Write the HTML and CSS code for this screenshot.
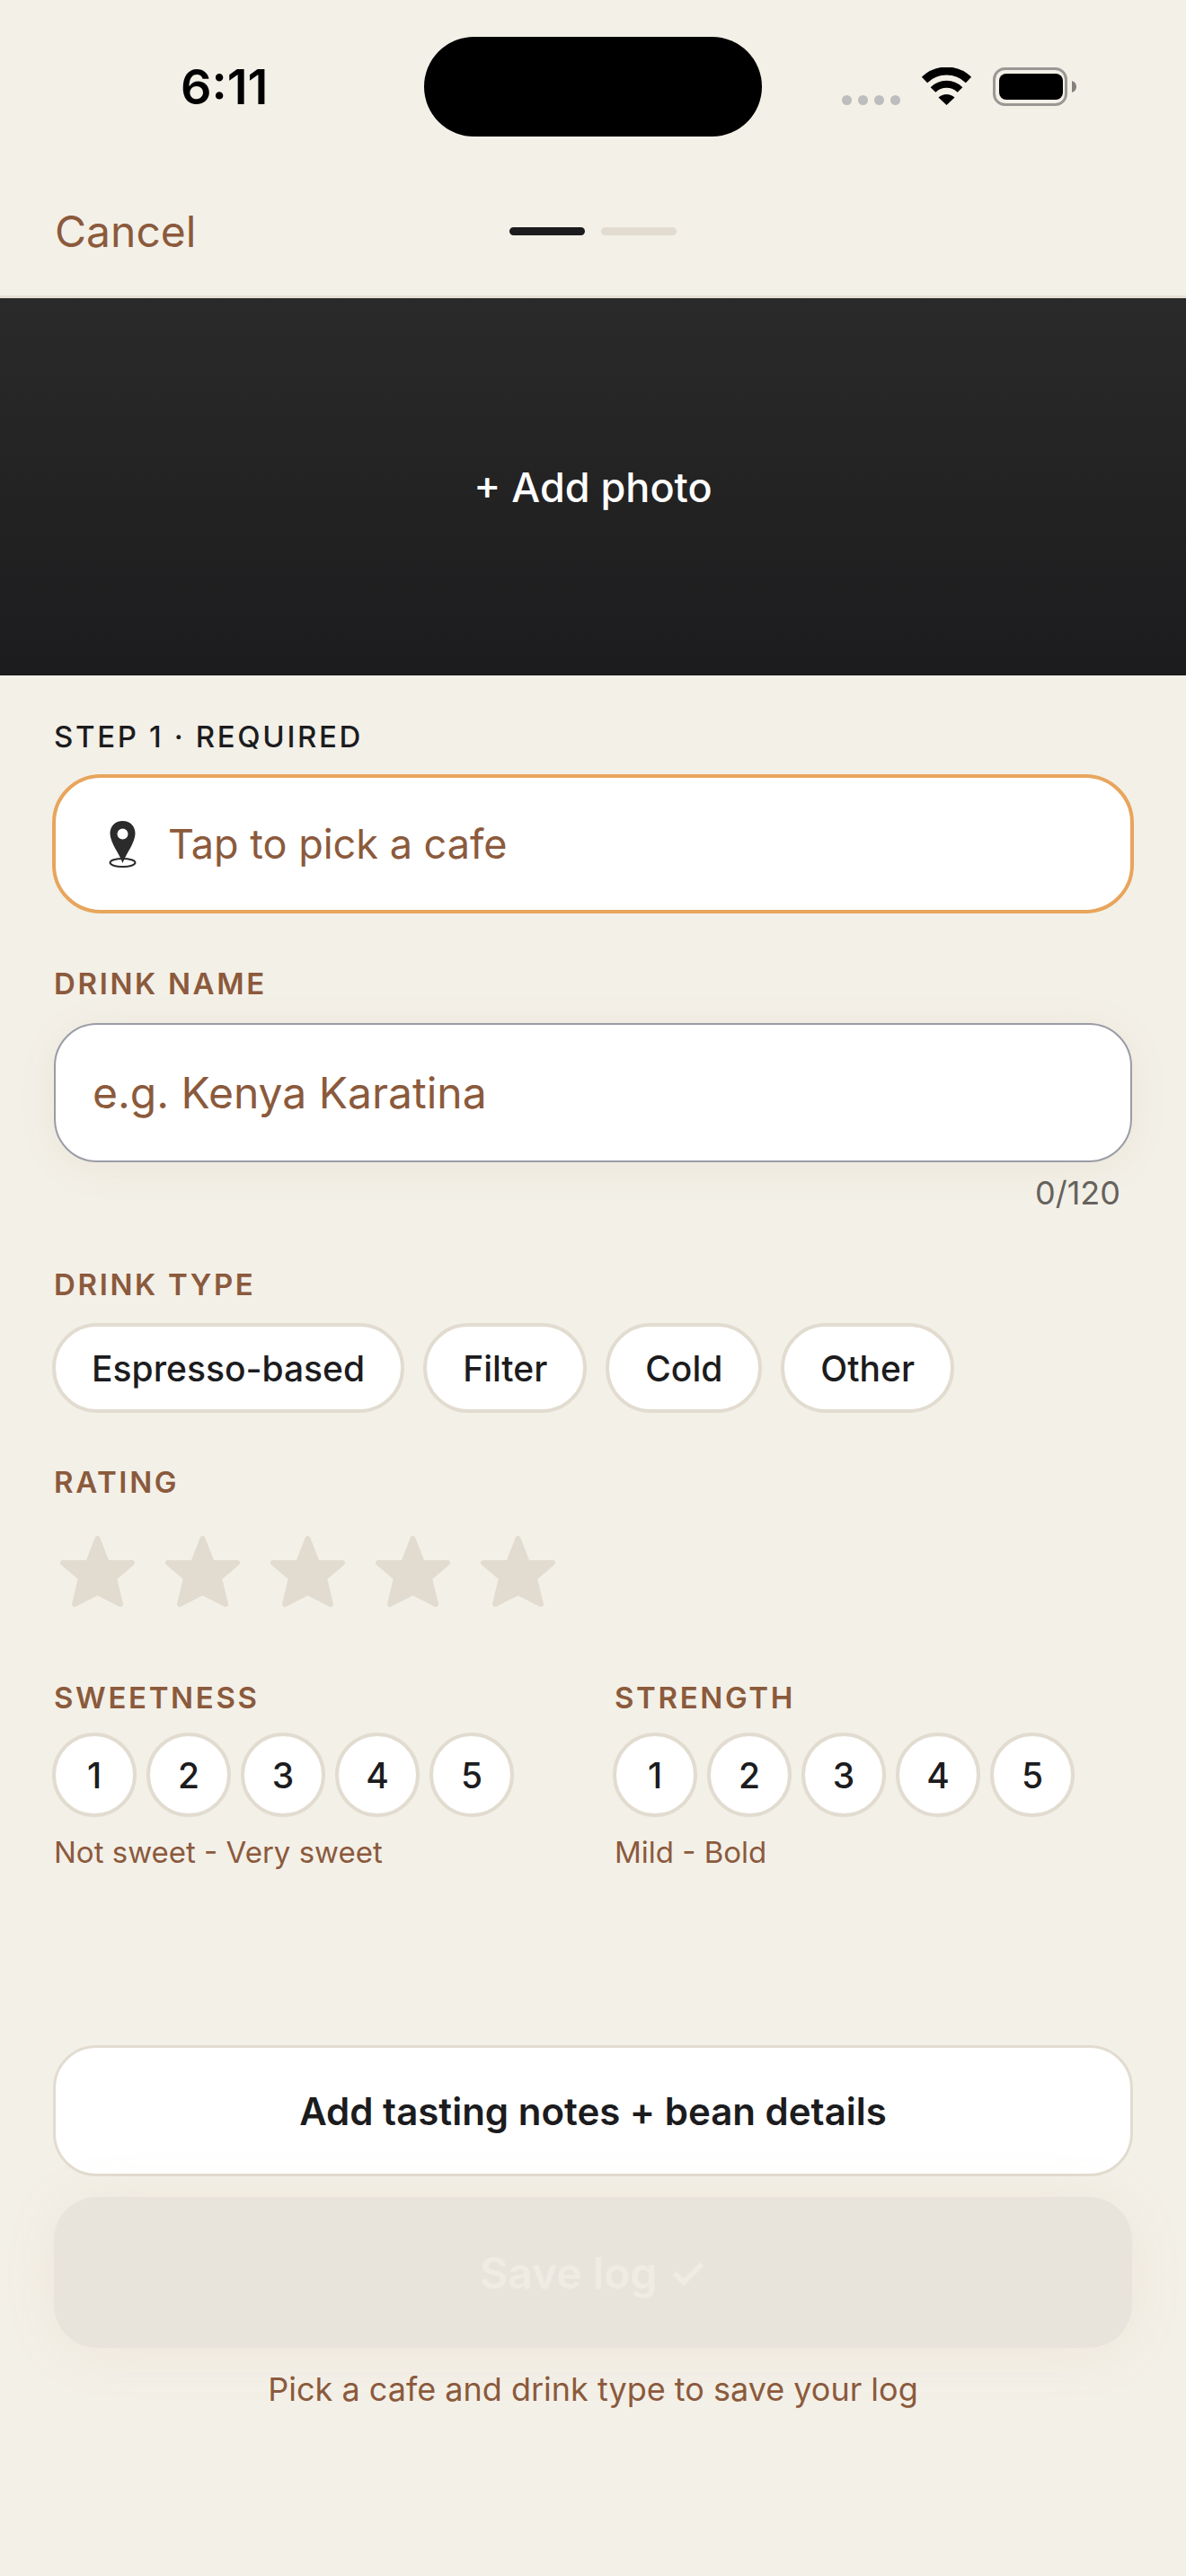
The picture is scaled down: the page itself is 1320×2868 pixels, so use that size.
FILE: index.html
```html
<!DOCTYPE html>
<html lang="en">
<head>
<meta charset="utf-8">
<title>New log</title>
<link rel="stylesheet" href="styles.css">
</head>
<body>
<div class="app">
  <div class="status">
    <div class="time">6:11</div>
    <div class="island"></div>
    <div class="status-icons">
      <div class="dots"><i></i><i></i><i></i><i></i></div>
      <svg class="wifi" width="57" height="42" viewBox="0 0 57 42"><path d="M4 14A35 35 0 0 1 53 14" fill="none" stroke="#000" stroke-width="9"/><path d="M13.500 25A21 21 0 0 1 43.500 25" fill="none" stroke="#000" stroke-width="8"/><path d="M28.500 42L19.500 33.500A13 13 0 0 1 37.500 33.500Z"/></svg>
      <svg class="battery" width="93" height="43" viewBox="0 0 93 43"><rect x="1.500" y="1.500" width="80" height="40" rx="12" fill="none" stroke="#9b9794" stroke-width="3"/><rect x="7" y="7" width="71" height="29" rx="8"/><path d="M88 15C91 16 93 18 93 21.500C93 25 91 27 88 28Z" fill="#85807c"/></svg>
    </div>
  </div>
  <header class="nav">
    <span class="cancel">Cancel</span>
    <div class="progress"><i class="on"></i><i></i></div>
  </header>
  <div class="hero"><span>+ Add photo</span></div>
  <main class="form">
    <div class="step">STEP 1 · REQUIRED</div>
    <div class="picker">
      <svg class="pin" width="31" height="52" viewBox="0 0 31 52"><ellipse cx="15.500" cy="46.500" rx="14" ry="4.500" fill="none" stroke="#2b2b2b" stroke-width="2"/><path fill-rule="evenodd" d="M15.500 0C7 0 1.500 6 1.500 14C1.500 24 11.500 36 15.500 47C19.500 36 29.500 24 29.500 14C29.500 6 24 0 15.500 0ZM15.500 8.500A6 6 0 1 1 15.500 20.500A6 6 0 1 1 15.500 8.500Z" fill="#2b2b2b"/></svg>
      <span>Tap to pick a cafe</span>
    </div>
    <div class="label name-label">DRINK NAME</div>
    <div class="input">e.g. Kenya Karatina</div>
    <div class="count">0/120</div>
    <div class="label type-label">DRINK TYPE</div>
    <div class="chips">
      <span class="chip">Espresso-based</span>
      <span class="chip">Filter</span>
      <span class="chip">Cold</span>
      <span class="chip">Other</span>
    </div>
    <div class="label rating-label">RATING</div>
    <div class="stars">
      <svg class="star" viewBox="0 0 83 80"><polygon points="41.500,3 52,30 80,30 60,47 67,76 41.500,63 16,76 23,47 3,30 31,30"/></svg>
      <svg class="star" viewBox="0 0 83 80"><polygon points="41.500,3 52,30 80,30 60,47 67,76 41.500,63 16,76 23,47 3,30 31,30"/></svg>
      <svg class="star" viewBox="0 0 83 80"><polygon points="41.500,3 52,30 80,30 60,47 67,76 41.500,63 16,76 23,47 3,30 31,30"/></svg>
      <svg class="star" viewBox="0 0 83 80"><polygon points="41.500,3 52,30 80,30 60,47 67,76 41.500,63 16,76 23,47 3,30 31,30"/></svg>
      <svg class="star" viewBox="0 0 83 80"><polygon points="41.500,3 52,30 80,30 60,47 67,76 41.500,63 16,76 23,47 3,30 31,30"/></svg>
    </div>
    <div class="scales">
      <section class="scale">
        <div class="label">SWEETNESS</div>
        <div class="circles"><span>1</span><span>2</span><span>3</span><span>4</span><span>5</span></div>
        <div class="sub">Not sweet - Very sweet</div>
      </section>
      <section class="scale">
        <div class="label">STRENGTH</div>
        <div class="circles"><span>1</span><span>2</span><span>3</span><span>4</span><span>5</span></div>
        <div class="sub">Mild - Bold</div>
      </section>
    </div>
    <div class="more">Add tasting notes + bean details</div>
    <div class="save">Save log ✓</div>
    <div class="hint">Pick a cafe and drink type to save your log</div>
  </main>
</div>
</body>
</html>
```
FILE: styles.css
```css
* { box-sizing: border-box; }
html, body { margin: 0; padding: 0; }
body { background: #f3f0e8; font-family: Inter, "Liberation Sans", sans-serif; color: #1c1c1e; }
.app { height: 2868px; overflow: hidden; position: relative; }
.status { height: 194px; position: relative; display: flex; justify-content: space-between; align-items: flex-start; }
.time { margin: 64px 0 0 201px; font-size: 54px; line-height: 66px; font-weight: 600; color: #000; }
.island { position: absolute; left: 472px; top: 41px; width: 376px; height: 111px; border-radius: 56px; background: #000; }
.status-icons { margin: 75px 122px 0 0; display: flex; align-items: flex-start; }
.dots { display: flex; gap: 7px; margin: 31px 23px 0 0; }
.dots i { width: 11px; height: 11px; border-radius: 50%; background: #bdbdbd; }
.wifi { margin-right: 23px; }
.nav { height: 138px; border-bottom: 3px solid #e6e0d4; position: relative; padding: 0 0 0 61px; }
.cancel { display: block; padding-top: 35px; font-size: 48px; line-height: 58px; color: #8b5a3c; }
.progress { position: absolute; left: 567px; top: 59px; display: flex; gap: 18px; }
.progress i { width: 84px; height: 9px; border-radius: 5px; background: #e2dcd0; }
.progress i.on { background: #1c1c1e; }
.hero { height: 420px; background: linear-gradient(180deg, #2a2a2a, #1c1c1e); display: flex; align-items: center; justify-content: center; color: #fff; font-size: 45px; font-weight: 500; }
.form { padding: 48px 60px 0; }
.step, .label { font-size: 33px; line-height: 40px; letter-spacing: 2.640px; font-weight: 500; }
.label { color: #8b5a3c; font-weight: 600; }
.picker { margin: 22px -2px 0; height: 155px; background: #fff; border: 4px solid #e8a55c; border-radius: 54px; display: flex; align-items: center; padding-left: 59px; gap: 35px; font-size: 45px; color: #8b5a3c; }
.name-label { margin-top: 58px; }
.input { margin-top: 24px; height: 155px; background: #fff; border: 2px solid #9a9ca6; border-radius: 48px; display: flex; align-items: center; padding-left: 41px; font-size: 48px; color: #8b5a3c; box-shadow: 0 6px 44px rgba(140, 120, 40, .08); }
.count { margin-top: 12px; padding-right: 13px; text-align: right; font-size: 36px; line-height: 44px; color: #66625c; }
.type-label { margin-top: 60px; }
.chips { margin: 23px 0 0 -2px; display: flex; gap: 21px; }
.chip { height: 100px; padding: 0 40px; display: flex; align-items: center; background: #fff; border: 4px solid #e2dcd0; border-radius: 50px; font-size: 39px; font-weight: 500; }
.rating-label { margin-top: 57px; }
.stars { margin: 40px 0 0 7px; display: flex; gap: 34px; }
.star { width: 83px; height: 80px; display: block; }
.star polygon { fill: #e2dcd0; stroke: #e2dcd0; stroke-width: 6; stroke-linejoin: round; }
.scales { margin-top: 80px; display: grid; grid-template-columns: 624px 1fr; }
.circles { margin: 19px 0 0 -2px; display: flex; gap: 11px; }
.circles span { width: 94px; height: 94px; display: flex; align-items: center; justify-content: center; background: #fff; border: 4px solid #e2dcd0; border-radius: 50%; font-size: 39px; font-weight: 500; }
.sub { margin-top: 19px; font-size: 33px; line-height: 40px; color: #8b5a3c; }
.more { margin: 195px -1px 0; height: 146px; background: #fff; border: 3px solid #e2dcd0; border-radius: 48px; display: flex; align-items: center; justify-content: center; font-size: 42px; font-weight: 600; }
.save { margin-top: 23px; height: 168px; background: #e8e4dc; border-radius: 48px; display: flex; align-items: center; justify-content: center; font-size: 48px; font-weight: 600; color: #efece4; box-shadow: 0 4px 64px rgba(200, 140, 80, .09); }
.hint { margin-top: 24px; text-align: center; font-size: 36px; line-height: 44px; color: #8b5a3c; }
```
